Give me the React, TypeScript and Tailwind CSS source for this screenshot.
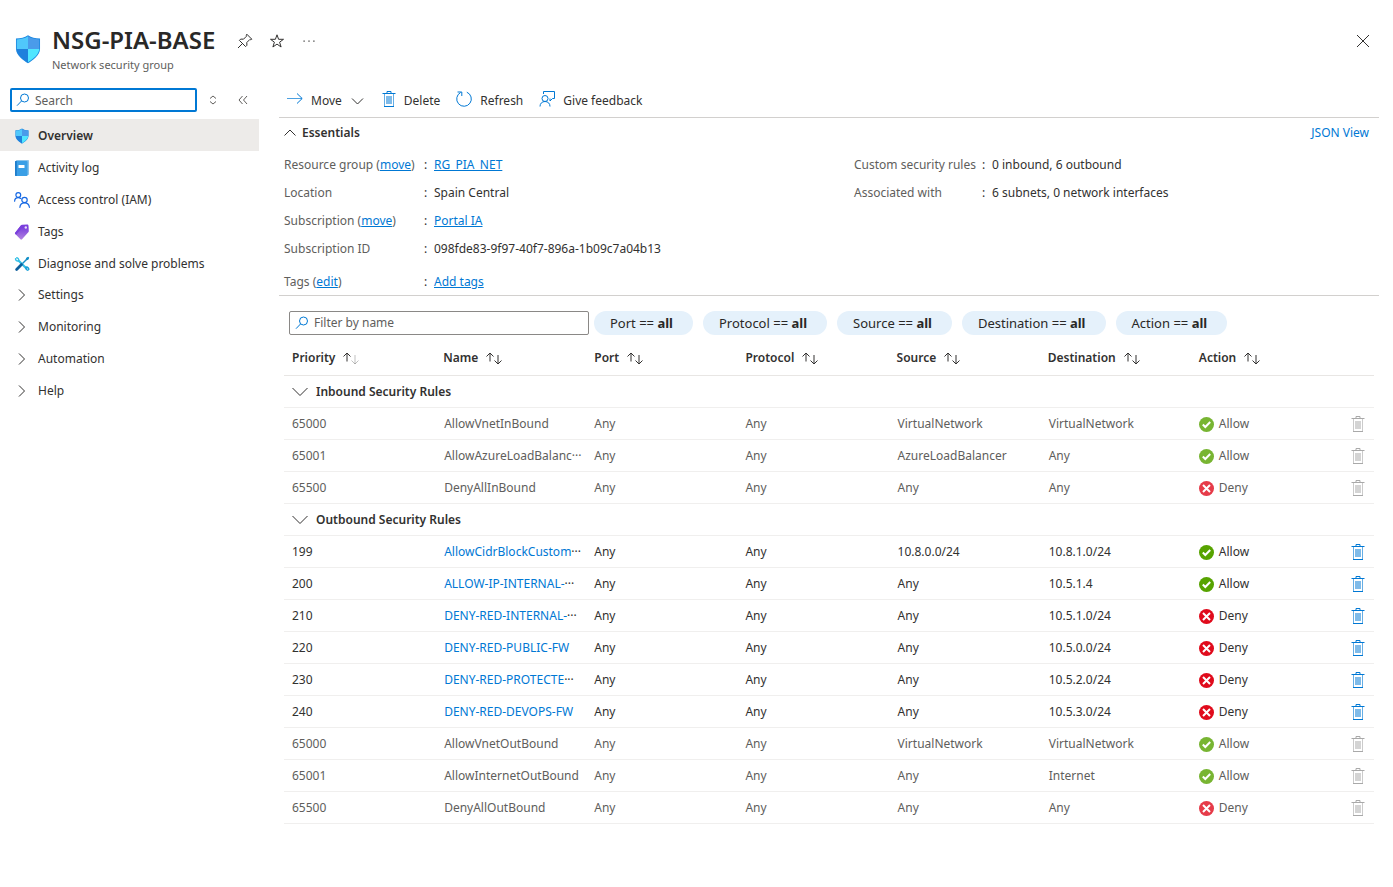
import type { ReactNode } from "react";

const links = [
  { label: "Overview", icon: <ShieldIcon className="h-4 w-4" />, active: true },
  { label: "Activity log", icon: <LogIcon /> },
  { label: "Access control (IAM)", icon: <PeopleIcon /> },
  { label: "Tags", icon: <TagIcon /> },
  { label: "Diagnose and solve problems", icon: <ToolsIcon /> },
];

const groups = ["Settings", "Monitoring", "Automation", "Help"];

const filters = ["Port", "Protocol", "Source", "Destination", "Action"];

const columns = ["Priority", "Name", "Port", "Protocol", "Source", "Destination", "Action"];

type Rule = {
  priority: number;
  name: string;
  cut?: boolean;
  source: string;
  destination: string;
  action: "Allow" | "Deny";
  custom?: boolean;
};

const inbound: Rule[] = [
  { priority: 65000, name: "AllowVnetInBound", source: "VirtualNetwork", destination: "VirtualNetwork", action: "Allow" },
  { priority: 65001, name: "AllowAzureLoadBalanc", cut: true, source: "AzureLoadBalancer", destination: "Any", action: "Allow" },
  { priority: 65500, name: "DenyAllInBound", source: "Any", destination: "Any", action: "Deny" },
];

const outbound: Rule[] = [
  { priority: 199, name: "AllowCidrBlockCustom", cut: true, source: "10.8.0.0/24", destination: "10.8.1.0/24", action: "Allow", custom: true },
  { priority: 200, name: "ALLOW-IP-INTERNAL-", cut: true, source: "Any", destination: "10.5.1.4", action: "Allow", custom: true },
  { priority: 210, name: "DENY-RED-INTERNAL-", cut: true, source: "Any", destination: "10.5.1.0/24", action: "Deny", custom: true },
  { priority: 220, name: "DENY-RED-PUBLIC-FW", source: "Any", destination: "10.5.0.0/24", action: "Deny", custom: true },
  { priority: 230, name: "DENY-RED-PROTECTE", cut: true, source: "Any", destination: "10.5.2.0/24", action: "Deny", custom: true },
  { priority: 240, name: "DENY-RED-DEVOPS-FW", source: "Any", destination: "10.5.3.0/24", action: "Deny", custom: true },
  { priority: 65000, name: "AllowVnetOutBound", source: "VirtualNetwork", destination: "VirtualNetwork", action: "Allow" },
  { priority: 65001, name: "AllowInternetOutBound", source: "Any", destination: "Internet", action: "Allow" },
  { priority: 65500, name: "DenyAllOutBound", source: "Any", destination: "Any", action: "Deny" },
];

function ShieldIcon({ className }: { className: string }) {
  return (
    <svg viewBox="1 0 16 18" className={className}>
      <path d="M9 .5c2.200 1.600 4.300 1.900 7.400 2.100v6.200c0 4-4.700 7.400-7.400 8.900C6.300 16.200 1.600 12.800 1.600 8.800V2.600C4.700 2.400 6.800 2.100 9 .5z" fill="#1b87e0" />
      <path d="M9 1.200v7.800H2.100V3.100C4.900 2.900 6.900 2.600 9 1.200z" fill="#50c8fb" />
      <path d="M9 1.200v7.800h6.900V3.100C13.100 2.900 11.100 2.600 9 1.200z" fill="#4a9bea" />
      <path d="M2.100 9H9v8.100C6.300 15.500 2.200 12.500 2.100 9z" fill="#1f80dc" />
      <path d="M15.900 9H9v8.100c2.700-1.600 6.800-4.600 6.900-8.100z" fill="#50e6ff" />
    </svg>
  );
}

function LogIcon() {
  return (
    <svg viewBox="0 0 16 16" className="h-4 w-4">
      <path d="M3 0h11.200c.5 0 .8.3.8.8v13.400c0 .5-.3.800-.8.800H13V1H2c0-.6.400-1 1-1z" fill="#8cc4ea" />
      <rect x="1" y="1" width="12.600" height="15" rx="1" fill="#3a9fe6" />
      <path d="M1 2c0-.6.400-1 1-1h.8v15H2c-.6 0-1-.4-1-1z" fill="#1f7dcb" />
      <rect x="4.500" y="5" width="6" height="3" rx=".5" fill="#fff" />
    </svg>
  );
}

function PeopleIcon() {
  return (
    <svg viewBox="0 0 16 16" className="h-4 w-4" fill="none" stroke="#1668e3" strokeWidth="1.200" strokeLinecap="round">
      <circle cx="4.300" cy="3" r="2.400" />
      <path d="M.6 9.200C.7 7 2.200 5.600 4.200 5.600c1 0 1.800.3 2.500.8" />
      <circle cx="10.500" cy="8" r="2.700" />
      <path d="M5.900 15.300c.2-2.700 2-4.400 4.600-4.400s4.600 1.700 4.900 4.400" />
    </svg>
  );
}

function TagIcon() {
  return (
    <svg viewBox="0 0 16 16" className="h-4 w-4">
      <defs>
        <linearGradient id="tag" x1="0" y1="0" x2="0" y2="1">
          <stop offset="0.2" stopColor="#7a3fdc" />
          <stop offset="1" stopColor="#b183e0" />
        </linearGradient>
      </defs>
      <path d="M8 .8 13 .5c1 0 1.400.4 1.500 1.200l.3 5.200c0 .5-.1.900-.5 1.300L8 15.300c-.5.500-1.100.5-1.600 0L1.300 10c-.5-.5-.4-1 0-1.500L6.800 1.500c.3-.4.700-.7 1.200-.7z" fill="url(#tag)" />
      <path d="m6.900 1.400 1.700 1.500L2.200 10.800l-.9-.8c-.5-.5-.4-1 0-1.500z" fill="#7a3fdc" />
      <circle cx="11.800" cy="3.500" r="1.200" fill="#e8dcf7" />
    </svg>
  );
}

function ToolsIcon() {
  return (
    <svg viewBox="0 0 16 16" className="h-4 w-4" fill="none">
      <path d="M14.500 1.500 8 8" stroke="#1490c8" strokeWidth="1.500" />
      <path d="m12.300 1.700 1.900-.9 1 1-.9 1.900-1.600.6-1-1z" fill="#1490c8" />
      <path d="m4 4 9 9" stroke="#32bfe6" strokeWidth="2.200" />
      <path d="M1.600 2.200c-.4 2 1 3.300 2.900 2.800C5.200 3.300 4 1.600 2.200 1.600" stroke="#32bfe6" strokeWidth="1.400" />
      <path d="M14.800 13.900c.3-1.800-1.100-3.200-2.900-2.800-.5 1.800.8 3.200 2.600 3.200" stroke="#1aa0d8" strokeWidth="1.400" />
      <path d="M7.500 8.500 2.600 13.400" stroke="#0f5f9c" strokeWidth="2.800" strokeLinecap="round" />
    </svg>
  );
}

function SearchIcon() {
  return (
    <svg viewBox="0 0 14 14" className="h-3.5 w-3.5 shrink-0" fill="none" stroke="#0078d4">
      <circle cx="8.500" cy="5" r="4" />
      <path d="M5.500 8 1 12.700" />
    </svg>
  );
}

function TrashIcon({ className }: { className: string }) {
  return (
    <svg viewBox="0 0 14 16" className={className} fill="none" stroke="currentColor">
      <path d="M.5 2.500h13M5 2V.5h4V2" />
      <path d="M2.500 3v12" opacity=".6" />
      <path d="M11.500 3v12" opacity=".6" />
      <path d="M2 15.500h10" />
      <path d="M4 5h6v8H4z" fill="currentColor" stroke="none" opacity=".5" />
    </svg>
  );
}

function Chevron({ d }: { d: string }) {
  return (
    <svg viewBox="0 0 16 16" className="h-4 w-4" fill="none" stroke="currentColor">
      <path d={d} />
    </svg>
  );
}

function SortIcon({ half }: { half?: boolean }) {
  return (
    <svg viewBox="0 0 16 14" className="h-3.5 w-4" fill="none" stroke="#323130">
      <path d="M4 10.500V2M.5 5.500 4 2l3.500 3.500" />
      <path d="M12 4v9M8.500 9.500 12 13l3.500-3.500" opacity={half ? 0.3 : 1} />
    </svg>
  );
}

function StatusIcon({ action, custom }: { action: Rule["action"]; custom?: boolean }) {
  return (
    <svg viewBox="0 0 15 15" className={custom ? "h-[15px] w-[15px]" : "h-[15px] w-[15px] opacity-80"} fill="none" stroke="#fff" strokeWidth="2">
      <circle cx="7.500" cy="7.500" r="7.500" stroke="none" fill={action === "Allow" ? "#57a300" : "#e00b1c"} />
      <path d={action === "Allow" ? "m3.800 7.500 2.500 2.500 4.900-5" : "m4 4 7 7m0-7-7 7"} />
    </svg>
  );
}

function Command({ icon, children }: { icon: ReactNode; children: ReactNode }) {
  return (
    <button type="button" className="flex items-center gap-2">
      <span className="pb-1">{icon}</span>
      {children}
    </button>
  );
}

function Field({ label, edit, wide, children }: { label: string; edit?: string; wide?: boolean; children: ReactNode }) {
  return (
    <div className="flex h-7 items-center whitespace-nowrap pt-0.5">
      <dt className={wide ? "w-[140px] text-[#605e5c]" : "w-[128px] text-[#605e5c]"}>
        {label}
        {edit && (
          <>
            {" "}
            (<a href="#" className="text-[#0078d4] underline">{edit}</a>)
          </>
        )}
      </dt>
      <dd className="flex">
        <span className="w-[10px]">:</span>
        {children}
      </dd>
    </div>
  );
}

function RuleGroup({ title, rules }: { title: string; rules: Rule[] }) {
  return (
    <tbody>
      <tr className="h-8">
        <th colSpan={8} scope="rowgroup" className="border-b border-[#f0efee] px-2 pt-px text-left font-semibold">
          <button type="button" className="flex items-center gap-2">
            <Chevron d="M.5 4 8 11.500 15.500 4" />
            {title}
          </button>
        </th>
      </tr>
      {rules.map((rule) => (
        <tr
          key={rule.priority}
          className={
            rule.custom
              ? "h-8 [&>td]:border-b [&>td]:border-[#f0efee] [&>td]:pt-px"
              : "h-8 text-[#605e5c] [&>td]:border-b [&>td]:border-[#f0efee] [&>td]:pt-px"
          }
        >
          <td className="px-2">{rule.priority}</td>
          <td className="whitespace-nowrap pl-[9px]">
            {rule.custom ? <a href="#" className="text-[#0078d4]">{rule.name}</a> : rule.name}
            {rule.cut && "···"}
          </td>
          <td className="px-2">Any</td>
          <td className="px-2">Any</td>
          <td className="pl-[9px]">{rule.source}</td>
          <td className="pl-[9px]">{rule.destination}</td>
          <td className="px-2">
            <span className="flex items-center gap-[5px]">
              <StatusIcon action={rule.action} custom={rule.custom} />
              {rule.action}
            </span>
          </td>
          <td className="pl-[9px]">
            <button type="button" aria-label="Delete rule" disabled={!rule.custom} className="flex">
              <TrashIcon className={rule.custom ? "h-4 w-3.5 text-[#0078d4]" : "h-4 w-3.5 text-[#a9a9a9]"} />
            </button>
          </td>
        </tr>
      ))}
    </tbody>
  );
}

export default function App() {
  return (
    <div className="min-h-screen bg-white pt-6 font-['Noto_Sans',sans-serif] text-xs leading-5 text-[#323130]">
      <header className="flex h-[60px] items-start pl-[15px] pr-[23px]">
        <ShieldIcon className="mt-[10px] h-[30px] w-[26px]" />
        <div className="ml-[11px]">
          <h1 className="text-2xl font-semibold leading-8 text-[#292827]">NSG-PIA-BASE</h1>
          <p className="text-[11px] leading-[18px] text-[#605e5c]">Network security group</p>
        </div>
        <div className="ml-[22px] flex h-[34px] items-center gap-4">
          <button type="button" aria-label="Pin">
            <svg viewBox="0 0 16 16" className="h-4 w-4" fill="none" stroke="#323130">
              <path d="M1 15l4.700-4.700M9.800 1.200l5 5-1.200.5-.8-.2-3 3 .1 2.800-1.300 1.300-6.200-6.200 1.300-1.300 2.800.1 3-3-.2-.8z" />
            </svg>
          </button>
          <button type="button" aria-label="Favorite">
            <svg viewBox="0 0 16 16" className="h-4 w-4" fill="none" stroke="#323130">
              <path d="m8 1.800 1.600 4.500h4.900l-3.900 2.900 1.500 4.800L8 11.100 3.900 14l1.500-4.800-3.900-2.900h4.900z" />
            </svg>
          </button>
          <button type="button" aria-label="More">
            <svg viewBox="0 0 16 16" className="h-4 w-4" fill="#323130">
              <path d="M2.500 7.500h1.200v1.200H2.500zM7.400 7.500h1.200v1.200H7.400zM12.300 7.500h1.200v1.200h-1.200z" />
            </svg>
          </button>
        </div>
        <button type="button" aria-label="Close" className="ml-auto flex h-[34px] items-center">
          <svg viewBox="0 0 14 14" className="h-3.5 w-3.5" fill="none" stroke="#323130">
            <path d="m1 1 12 12M13 1 1 13" />
          </svg>
        </button>
      </header>

      <div className="flex">
        <nav className="mr-5 w-[259px] shrink-0">
          <div className="flex h-[35px] items-center pb-[3px] pl-[10px]">
            <label className="flex h-6 w-[187px] items-center gap-[5px] rounded-xs border-2 border-[#0078d4] px-1">
              <SearchIcon />
              <input type="search" aria-label="Search" placeholder="Search" className="w-full pt-px outline-none placeholder:text-[#605e5c]" />
            </label>
            <button type="button" aria-label="Sort menu" className="ml-2">
              <svg viewBox="0 0 16 16" className="h-4 w-4" fill="none" stroke="#605e5c">
                <path d="M5 6.500 8 4l3 2.500M5 9.500 8 12l3-2.500" />
              </svg>
            </button>
            <button type="button" aria-label="Collapse menu" className="ml-[14px]">
              <svg viewBox="0 0 16 16" className="h-4 w-4" fill="none" stroke="#605e5c">
                <path d="M7.500 4 4 8l3.500 4M12 4 8.500 8l3.500 4" />
              </svg>
            </button>
          </div>
          <ul>
            {links.map((link) => (
              <li key={link.label}>
                <a
                  href="#"
                  className={link.active ? "flex h-8 items-center gap-2 bg-[#edebe9] pt-0.5 pl-[14px] font-semibold" : "flex h-8 items-center gap-2 pt-0.5 pl-[14px]"}
                >
                  {link.icon}
                  {link.label}
                </a>
              </li>
            ))}
          </ul>
          <div className="-mt-px">
            {groups.map((group) => (
              <button key={group} type="button" className="flex h-8 w-full items-center gap-2 pt-0.5 pl-[14px]">
                <Chevron d="m5 2.500 5.500 5.500L5 13.500" />
                {group}
              </button>
            ))}
          </div>
        </nav>

        <main className="min-w-0 flex-1 pr-[14px]">
          <div className="flex h-[34px] items-center gap-4 border-b border-[#d2d0ce] pt-px pl-2">
            <Command
              icon={
                <svg viewBox="0 0 16 16" className="h-4 w-4" fill="none" stroke="#0078d4">
                  <path d="M0 7.500h15" opacity=".7" />
                  <path d="M10 2.500l5.200 5-5.200 5" />
                </svg>
              }
            >
              Move
              <Chevron d="M2 5.500 7.500 11 13 5.500" />
            </Command>
            <Command icon={<TrashIcon className="h-4 w-3.5 text-[#0078d4]" />}>Delete</Command>
            <Command
              icon={
                <svg viewBox="0 0 16 16" className="h-4 w-4" fill="none" stroke="#0078d4">
                  <path d="M10.800 1.200a7.300 7.300 0 1 1-6.200.3M5.800 5V1H1.500" />
                </svg>
              }
            >
              Refresh
            </Command>
            <Command
              icon={
                <svg viewBox="0 0 16 16" className="h-4 w-4" fill="none" stroke="#0078d4">
                  <circle cx="6" cy="7.500" r="3" />
                  <path d="M1 15.500c0-3 2-5 5-5s5 2 5 5M4.500 3V.5h11v7h-2L11 10V7.500" />
                </svg>
              }
            >
              Give feedback
            </Command>
          </div>

          <section className="border-b border-[#d2d0ce]">
            <div className="flex h-[29px] items-center justify-between pl-1 pr-[10px]">
              <button type="button" className="flex items-center gap-[3px] font-semibold">
                <Chevron d="M1.500 10.500 7 5l5.500 5.500" />
                Essentials
              </button>
              <a href="#" className="text-[#0078d4]">JSON View</a>
            </div>
            <div className="grid grid-cols-[570px_1fr] pl-[5px] pt-[3px]">
              <dl>
                <Field label="Resource group" edit="move" wide>
                  <a href="#" className="text-[#0078d4] underline">RG_PIA_NET</a>
                </Field>
                <Field label="Location" wide>Spain Central</Field>
                <Field label="Subscription" edit="move" wide>
                  <a href="#" className="text-[#0078d4] underline">Portal IA</a>
                </Field>
                <Field label="Subscription ID" wide>098fde83-9f97-40f7-896a-1b09c7a04b13</Field>
              </dl>
              <dl>
                <Field label="Custom security rules">0 inbound, 6 outbound</Field>
                <Field label="Associated with">6 subnets, 0 network interfaces</Field>
              </dl>
              <dl className="mt-[5px]">
                <Field label="Tags" edit="edit" wide>
                  <a href="#" className="text-[#0078d4] underline">Add tags</a>
                </Field>
              </dl>
            </div>
          </section>

          <div className="flex items-center gap-[10px] pl-[10px] pt-[15px]">
            <label className="-mr-[5px] flex h-6 w-[300px] items-center gap-[5px] rounded-xs border border-[#8a8886] px-[5px]">
              <SearchIcon />
              <input type="text" aria-label="Filter by name" placeholder="Filter by name" className="w-full outline-none placeholder:text-[#605e5c]" />
            </label>
            {filters.map((filter) => (
              <button key={filter} type="button" className="h-6 rounded-full bg-[#e5f1fb] pl-4 pr-5 text-[13px] text-[#292827]">
                {filter} == <b>all</b>
              </button>
            ))}
          </div>

          <div className="pl-[5px] pr-[5px] pt-1">
            <table className="w-full table-fixed border-separate border-spacing-0">
              <thead>
                <tr className="h-[37px]">
                  {columns.map((column, i) => (
                    <th key={column} scope="col" className="border-b border-[#e8e6e4] px-2 pt-0.5 text-left font-semibold">
                      <button type="button" className="flex items-center gap-2">
                        {column}
                        <SortIcon half={i === 0} />
                      </button>
                    </th>
                  ))}
                  <th className="w-8 border-b border-[#e8e6e4]" aria-label="Delete" />
                </tr>
              </thead>
              <RuleGroup title="Inbound Security Rules" rules={inbound} />
              <RuleGroup title="Outbound Security Rules" rules={outbound} />
            </table>
          </div>
        </main>
      </div>
    </div>
  );
}
